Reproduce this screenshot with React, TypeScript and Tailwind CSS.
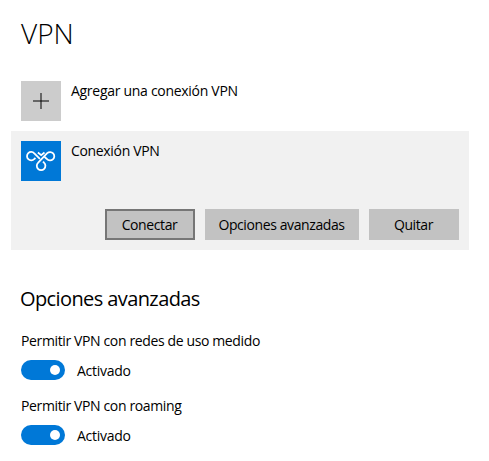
import type { ReactNode } from 'react';

function VpnIcon() {
  return (
    <svg width="40" height="40" viewBox="0 0 40 40" fill="none" stroke="#fff" strokeWidth="1.8">
      <path d="M18.9 17.9L13.3 12.3A4.2 4.2 0 1 0 13.3 18L14.4 16.9" />
      <path d="M22.9 15.3L25.9 18A4.2 4.2 0 1 0 26.2 12.2L17.2 21.6A4.3 4.3 0 1 0 23 21.6L22 20.6" />
      <path d="M16.9 11.5L20.2 14.1L23.5 11.5" />
    </svg>
  );
}

function Button({ className, children }: { className: string; children: ReactNode }) {
  return (
    <button
      className={`flex h-[31px] items-center justify-center bg-[#c2c2c2] pt-px pr-px tracking-[-0.4px] whitespace-nowrap ${className}`}
    >
      {children}
    </button>
  );
}

function Toggle({ label }: { label: string }) {
  return (
    <div className="h-[65px]">
      <p className="h-5 tracking-[-0.37px] whitespace-nowrap">{label}</p>
      <div className="mt-[9px] flex h-5 items-center">
        <div className="flex h-5 w-11 items-center justify-end rounded-full bg-[#0078d7] pr-[5px]">
          <span className="size-2.5 rounded-full bg-white" />
        </div>
        <span className="ml-3 pt-0.5 tracking-[-0.28px]">Activado</span>
      </div>
    </div>
  );
}

export default function App() {
  return (
    <main className="h-[461px] w-[489px] overflow-hidden bg-white pt-[15px] font-['Open_Sans',sans-serif] text-[14px] leading-5 text-black">
      <h1 className="ml-[21px] h-[66px] text-[28px] leading-9 font-light">VPN</h1>
      <div className="ml-[21px] flex h-[50px]">
        <div className="flex size-10 items-center justify-center bg-[#ccc]">
          <svg width="16" height="16" viewBox="0 0 16 16" shapeRendering="crispEdges">
            <path d="M0 7h16v2H0z" fill="#000" fillOpacity="0.5" />
            <path d="M7 0h2v16H7z" fill="#000" fillOpacity="0.5" />
          </svg>
        </div>
        <p className="ml-2.5 tracking-[-0.29px]">Agregar una conexión VPN</p>
      </div>
      <section className="ml-[11px] flex h-[119px] w-[458px] flex-col justify-between bg-[#f1f1f1] p-2.5">
        <div className="flex">
          <div className="size-10 bg-[#0078d7]">
            <VpnIcon />
          </div>
          <p className="ml-2.5 tracking-[-0.33px]">Conexión VPN</p>
        </div>
        <div className="flex justify-end gap-2.5">
          <Button className="w-[90px] border-2 border-[#767676]">Conectar</Button>
          <Button className="w-[154px]">Opciones avanzadas</Button>
          <Button className="w-[90px]">Quitar</Button>
        </div>
      </section>
      <h2 className="mt-[35px] ml-5 h-[46px] text-[20px] leading-7 tracking-[-0.6px]">Opciones avanzadas</h2>
      <div className="ml-[21px]">
        <Toggle label="Permitir VPN con redes de uso medido" />
        <Toggle label="Permitir VPN con roaming" />
      </div>
    </main>
  );
}
